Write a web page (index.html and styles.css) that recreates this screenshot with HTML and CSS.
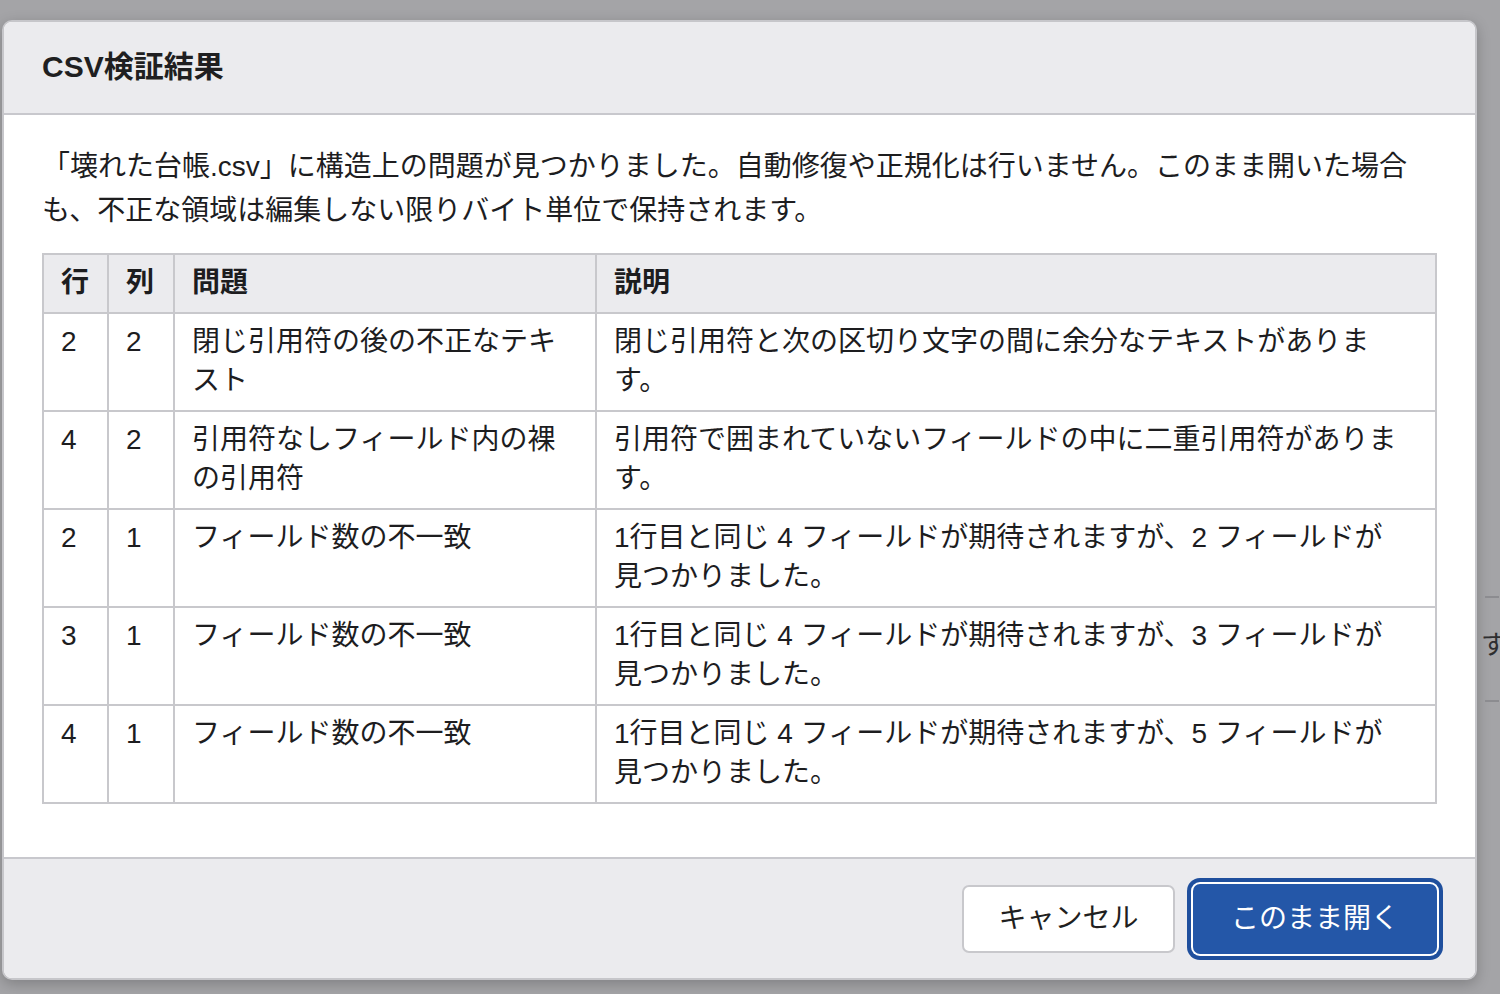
FILE: index.html
```html
<!DOCTYPE html>
<html lang="ja">
<head>
<meta charset="utf-8">
<title>CSV検証結果</title>
<link rel="stylesheet" href="styles.css">
</head>
<body>
<div class="underlay" aria-hidden="true">
  <span class="under-line under-line-top"></span>
  <span class="under-text">す</span>
  <span class="under-line under-line-bottom"></span>
</div>
<div class="dialog" role="dialog" aria-labelledby="dlg-title">
  <header class="dialog-header">
    <h1 id="dlg-title" class="dialog-title">CSV検証結果</h1>
  </header>
  <section class="dialog-body">
    <p class="intro">「壊れた台帳.csv」に構造上の問題が見つかりました。自動修復や正規化は行いません。このまま開いた場合も、不正な領域は編集しない限りバイト単位で保持されます。</p>
    <table class="issues">
      <colgroup>
        <col class="c-row">
        <col class="c-col">
        <col class="c-issue">
        <col class="c-desc">
      </colgroup>
      <thead>
        <tr><th>行</th><th>列</th><th>問題</th><th class="desc">説明</th></tr>
      </thead>
      <tbody>
        <tr><td>2</td><td>2</td><td>閉じ引用符の後の不正なテキスト</td><td class="desc">閉じ引用符と次の区切り文字の間に余分なテキストがあります。</td></tr>
        <tr><td>4</td><td>2</td><td>引用符なしフィールド内の裸の引用符</td><td class="desc">引用符で囲まれていないフィールドの中に二重引用符があります。</td></tr>
        <tr><td>2</td><td>1</td><td>フィールド数の不一致</td><td class="desc">1行目と同じ 4 フィールドが期待されますが、2 フィールドが見つかりました。</td></tr>
        <tr><td>3</td><td>1</td><td>フィールド数の不一致</td><td class="desc">1行目と同じ 4 フィールドが期待されますが、3 フィールドが見つかりました。</td></tr>
        <tr><td>4</td><td>1</td><td>フィールド数の不一致</td><td class="desc">1行目と同じ 4 フィールドが期待されますが、5 フィールドが見つかりました。</td></tr>
      </tbody>
    </table>
  </section>
  <footer class="dialog-footer">
    <button class="btn btn-secondary" type="button">キャンセル</button>
    <button class="btn btn-primary" type="button">このまま開く</button>
  </footer>
</div>
</body>
</html>
```

FILE: styles.css
```css
html, body {
  margin: 0;
  padding: 0;
}

body {
  width: 1500px;
  height: 994px;
  overflow: hidden;
  background: #a4a4a7;
  font-family: "Liberation Sans", "Noto Sans CJK JP", sans-serif;
  color: #1d1d1f;
  position: relative;
  padding: 20px 0 0 2px;
  box-sizing: border-box;
}

.underlay {
  position: absolute;
  left: 1479px;
  top: 590px;
  width: 21px;
  height: 120px;
  overflow: hidden;
}

.under-line {
  position: absolute;
  left: 6px;
  width: 14px;
  height: 2px;
  background: #8c8c90;
}

.under-line-top { top: 6px; }
.under-line-bottom { top: 110px; }

.under-text {
  position: absolute;
  left: 2px;
  top: 40px;
  font-size: 26px;
  line-height: 30px;
  color: #2e2e30;
}

.dialog {
  width: 1475px;
  box-sizing: border-box;
  background: #ffffff;
  border: 2px solid #c6c6ca;
  border-radius: 10px;
  overflow: hidden;
  box-shadow: 0 4px 14px rgba(0, 0, 0, 0.22);
}

.dialog-header {
  background: #ebebee;
  border-bottom: 2px solid #c8c8cd;
  padding: 26px 38px 27px;
}

.dialog-title {
  margin: 0;
  font-size: 30px;
  line-height: 38px;
  font-weight: 700;
  color: #1f1f21;
}

.dialog-body {
  padding: 30px 38px 53px;
}

.intro {
  margin: 0 0 20px;
  font-size: 28px;
  line-height: 44px;
}

.issues {
  width: 1395px;
  table-layout: fixed;
  border-collapse: collapse;
  border: 2px solid #c8c8cc;
  font-size: 28px;
  line-height: 39px;
}

.c-row { width: 65px; }
.c-col { width: 66px; }
.c-issue { width: 422px; }

.issues th,
.issues td {
  border: 2px solid #c8c8cc;
  padding: 8px 17px 10px;
  text-align: left;
  vertical-align: top;
}

.issues .desc {
  padding-right: 30px;
}

.issues th {
  background: #ebebee;
  font-weight: 700;
}

.dialog-footer {
  background: #ebebee;
  border-top: 2px solid #c8c8cd;
  padding: 25px 38px 24px;
  display: flex;
  justify-content: flex-end;
  align-items: center;
  gap: 18px;
}

.btn {
  font-family: inherit;
  font-size: 28px;
  line-height: 36px;
  border-radius: 7px;
  cursor: pointer;
  box-sizing: border-box;
}

.btn-secondary {
  width: 213px;
  height: 68px;
  background: #ffffff;
  border: 2px solid #c8c8cc;
  color: #1f1f21;
}

.btn-primary {
  width: 244px;
  height: 70px;
  background: #2457a8;
  border: none;
  color: #ffffff;
  box-shadow: 0 0 0 2px #ffffff, 0 0 0 6px #1f4f9d;
}
```
